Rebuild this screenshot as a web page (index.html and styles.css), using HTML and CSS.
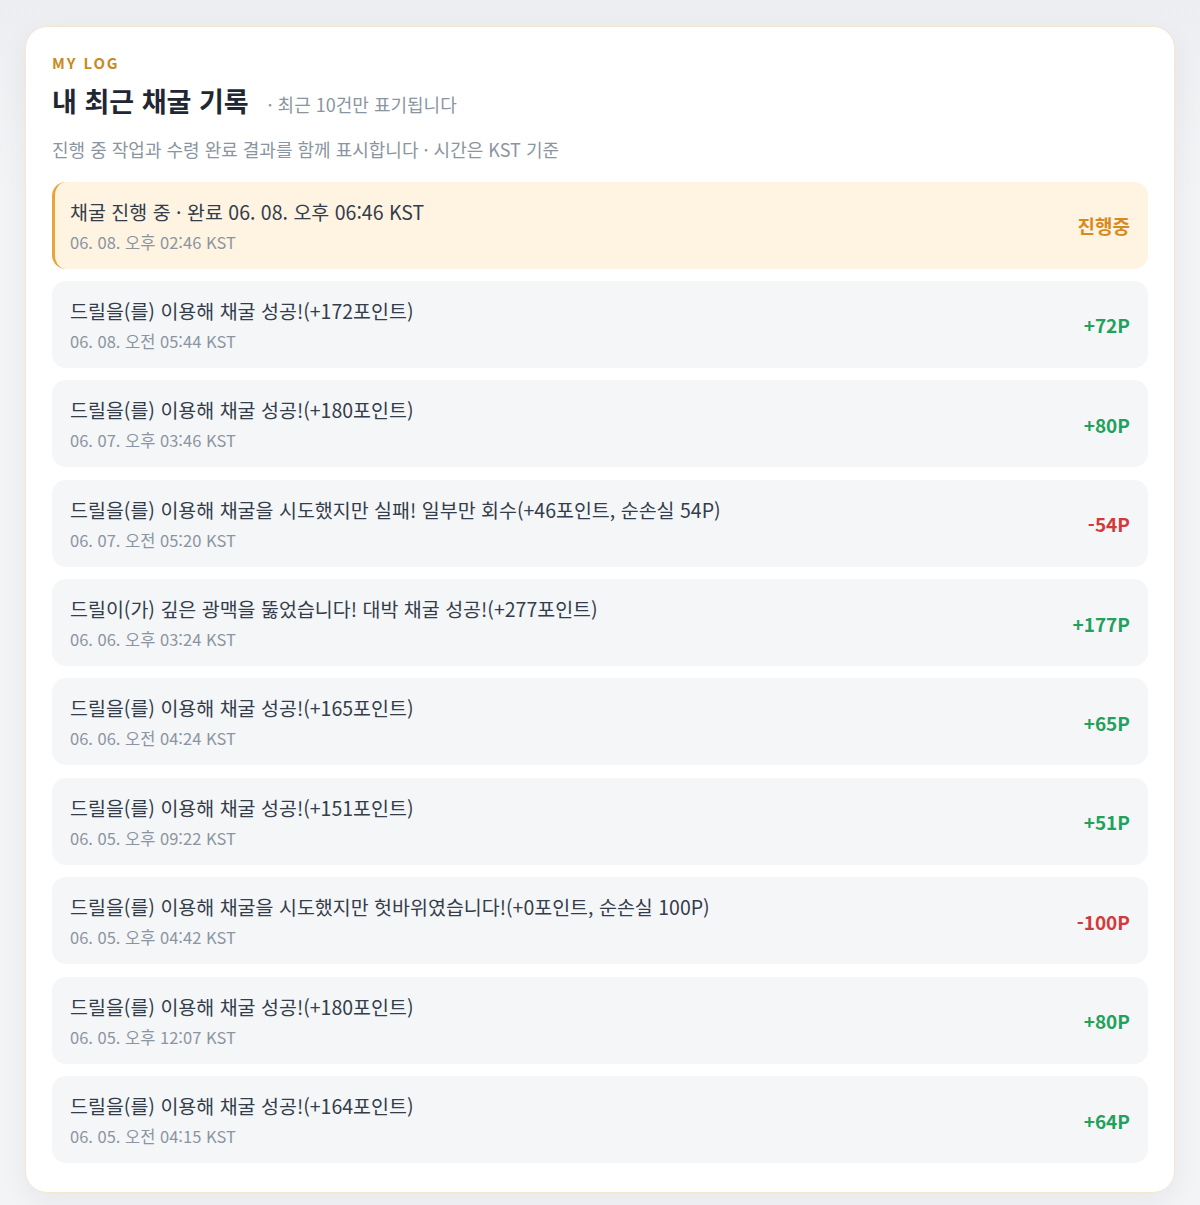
FILE: index.html
```html
<!DOCTYPE html>
<html lang="ko">
<head>
<meta charset="utf-8">
<title>MY LOG</title>
<link rel="stylesheet" href="styles.css">
</head>
<body>
<section class="card">
  <div class="eyebrow">MY LOG</div>
  <div class="title-row">
    <h1 class="title">내 최근 채굴 기록</h1>
    <span class="note">· 최근 10건만 표기됩니다</span>
  </div>
  <p class="desc">진행 중 작업과 수령 완료 결과를 함께 표시합니다 · 시간은 KST 기준</p>
  <ul class="list">
    <li class="item pending">
      <div class="info"><div class="msg">채굴 진행 중 · 완료 06. 08. 오후 06:46 KST</div><div class="time">06. 08. 오후 02:46 KST</div></div>
      <div class="val orange">진행중</div>
    </li>
    <li class="item">
      <div class="info"><div class="msg">드릴을(를) 이용해 채굴 성공!(+172포인트)</div><div class="time">06. 08. 오전 05:44 KST</div></div>
      <div class="val green">+72P</div>
    </li>
    <li class="item">
      <div class="info"><div class="msg">드릴을(를) 이용해 채굴 성공!(+180포인트)</div><div class="time">06. 07. 오후 03:46 KST</div></div>
      <div class="val green">+80P</div>
    </li>
    <li class="item">
      <div class="info"><div class="msg">드릴을(를) 이용해 채굴을 시도했지만 실패! 일부만 회수(+46포인트, 순손실 54P)</div><div class="time">06. 07. 오전 05:20 KST</div></div>
      <div class="val red">-54P</div>
    </li>
    <li class="item">
      <div class="info"><div class="msg">드릴이(가) 깊은 광맥을 뚫었습니다! 대박 채굴 성공!(+277포인트)</div><div class="time">06. 06. 오후 03:24 KST</div></div>
      <div class="val green">+177P</div>
    </li>
    <li class="item">
      <div class="info"><div class="msg">드릴을(를) 이용해 채굴 성공!(+165포인트)</div><div class="time">06. 06. 오전 04:24 KST</div></div>
      <div class="val green">+65P</div>
    </li>
    <li class="item">
      <div class="info"><div class="msg">드릴을(를) 이용해 채굴 성공!(+151포인트)</div><div class="time">06. 05. 오후 09:22 KST</div></div>
      <div class="val green">+51P</div>
    </li>
    <li class="item">
      <div class="info"><div class="msg">드릴을(를) 이용해 채굴을 시도했지만 헛바위였습니다!(+0포인트, 순손실 100P)</div><div class="time">06. 05. 오후 04:42 KST</div></div>
      <div class="val red">-100P</div>
    </li>
    <li class="item">
      <div class="info"><div class="msg">드릴을(를) 이용해 채굴 성공!(+180포인트)</div><div class="time">06. 05. 오후 12:07 KST</div></div>
      <div class="val green">+80P</div>
    </li>
    <li class="item">
      <div class="info"><div class="msg">드릴을(를) 이용해 채굴 성공!(+164포인트)</div><div class="time">06. 05. 오전 04:15 KST</div></div>
      <div class="val green">+64P</div>
    </li>
  </ul>
</section>
</body>
</html>
```
FILE: styles.css
```css
html, body {
  margin: 0;
  padding: 0;
}
body {
  background: linear-gradient(#eceef1, #f3f4f6 200px);
  font-family: "Noto Sans CJK KR", "Noto Sans", sans-serif;
  color: #333d4b;
  padding: 26px 25px 13px;
  min-height: 1205px;
  box-sizing: border-box;
}
.card {
  background: #fff;
  border: 1px solid #f3e8cf;
  border-radius: 22px;
  padding: 26px 26px 29px;
  box-shadow: 0 8px 28px rgba(20, 30, 50, 0.06);
}
.eyebrow {
  font-size: 15px;
  line-height: 20px;
  font-weight: 700;
  letter-spacing: 1.9px;
  color: #c98a25;
}
.title-row {
  display: flex;
  align-items: baseline;
  margin-top: 11px;
}
.title {
  margin: 0;
  font-size: 27px;
  line-height: 34px;
  font-weight: 700;
  color: #1f2733;
}
.note {
  margin-left: 19px;
  font-size: 18px;
  color: #8b95a1;
}
.desc {
  margin: 19px 0 0;
  font-size: 18px;
  line-height: 24px;
  color: #8b95a1;
}
.list {
  list-style: none;
  margin: 20.5px 0 0;
  padding: 0;
  display: flex;
  flex-direction: column;
  gap: 12.4px;
}
.item {
  display: flex;
  align-items: center;
  justify-content: space-between;
  background: #f5f6f8;
  border-radius: 14px;
  padding: 16px 18px 15px;
  height: 87px;
  box-sizing: border-box;
}
.item.pending {
  background: #fff3e2;
  border-left: 3px solid #e6a536;
  padding-left: 15px;
}
.info {
  align-self: flex-start;
}
.msg {
  font-size: 19.5px;
  line-height: 28px;
  color: #333d4b;
}
.time {
  margin-top: 5px;
  font-size: 16.5px;
  line-height: 22px;
  color: #8b95a1;
}
.val {
  font-size: 19px;
  font-weight: 700;
}
.green { color: #23a05a; }
.red { color: #d23a3a; }
.orange { color: #d98a1e; }
```
